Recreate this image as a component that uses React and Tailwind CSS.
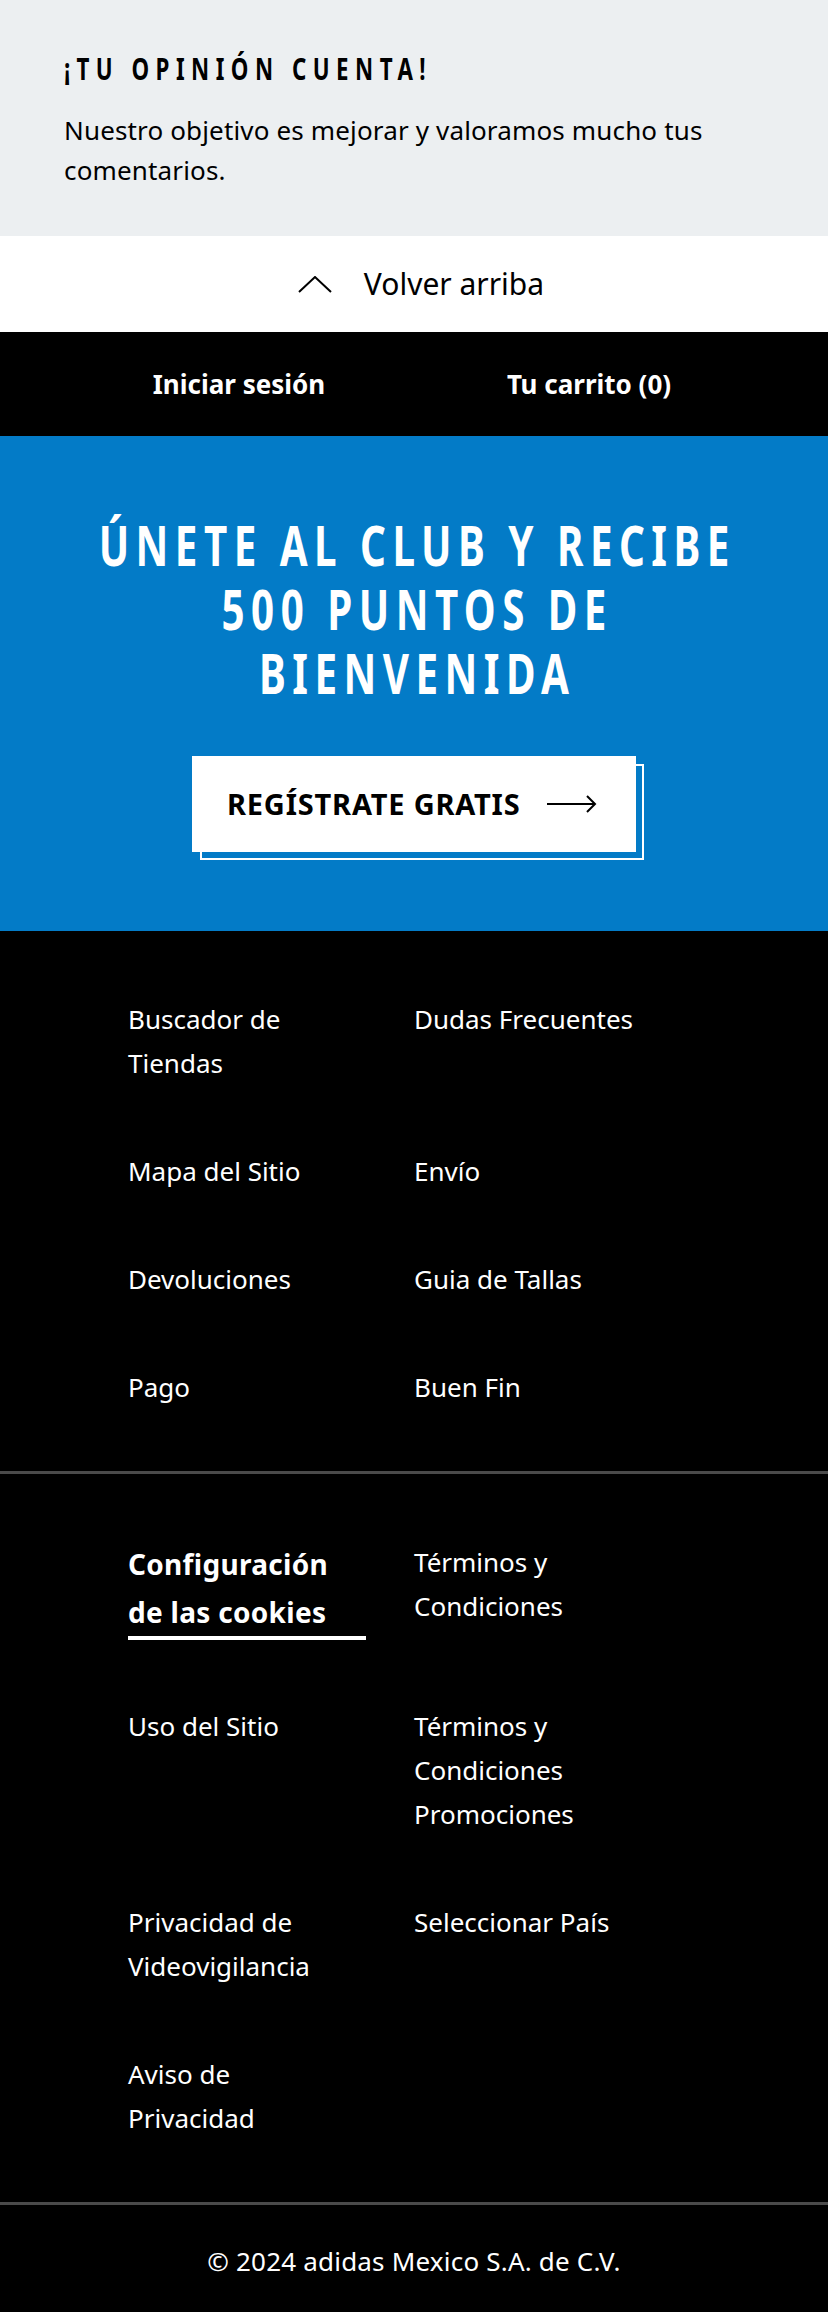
import React from "react";

function ChevronUp() {
  return (
    <svg width="34" height="17" viewBox="0 0 34 17" fill="none" aria-hidden="true">
      <polyline points="1,16 17,1 33,16" stroke="#000" strokeWidth="2" fill="none" />
    </svg>
  );
}

function ArrowRight() {
  return (
    <svg width="50" height="20" viewBox="0 0 50 20" fill="none" aria-hidden="true">
      <line x1="0" y1="10" x2="48" y2="10" stroke="#000" strokeWidth="2" />
      <polyline points="40,2 48,10 40,18" stroke="#000" strokeWidth="2" fill="none" />
    </svg>
  );
}

function FooterLink({ lines }) {
  return (
    <a href="#" className="block whitespace-nowrap text-[26px] leading-[44px] text-white">
      {lines.map((l, i) => (
        <React.Fragment key={i}>
          {i > 0 && <br />}
          {l}
        </React.Fragment>
      ))}
    </a>
  );
}

export default function App() {
  return (
    <div className="w-[828px] overflow-hidden font-['Noto_Sans',sans-serif]">
      {/* Feedback */}
      <section className="bg-[#eceff1] px-[64px] pt-[50px] pb-[46px] text-black">
        <h4 className="origin-left scale-x-[0.72] whitespace-nowrap text-[31px] leading-[36px] font-bold tracking-[9px] uppercase">
          ¡Tu opinión cuenta!
        </h4>
        <p className="mt-[24px] text-[26px] leading-[40px] tracking-[0.15px]">
          Nuestro objetivo es mejorar y valoramos mucho tus comentarios.
        </p>
      </section>

      {/* Back to top */}
      <div className="flex h-[96px] items-center justify-center gap-[32px] bg-white pl-[14px]">
        <ChevronUp />
        <span className="text-[30px] leading-[40px] text-black">Volver arriba</span>
      </div>

      {/* Account nav */}
      <nav className="grid h-[104px] grid-cols-2 items-center bg-black px-[64px]">
        <a href="#" className="text-center text-[26px] font-bold leading-[36px] text-white">
          Iniciar sesión
        </a>
        <a href="#" className="text-center text-[26px] font-bold leading-[36px] text-white">
          Tu carrito (0)
        </a>
      </nav>

      {/* Club */}
      <section className="flex h-[495px] flex-col items-center bg-[#037bc7] pt-[76px]">
        <h2 className="w-[1000px] shrink-0 origin-center scale-x-[0.72] whitespace-nowrap pl-[9px] text-center text-[56px] font-bold leading-[64px] tracking-[9px] text-white uppercase">
          Únete al club y recibe
          <br />
          500 puntos de
          <br />
          bienvenida
        </h2>
        <div className="relative mt-[52px] h-[96px] w-[444px]">
          <div className="absolute left-[8px] top-[8px] h-[96px] w-[444px] border-2 border-white" />
          <a
            href="#"
            className="relative flex h-[96px] w-[444px] items-center justify-between bg-white pl-[35px] pr-[39px]"
          >
            <span className="text-[29px] font-bold leading-[36px] tracking-[0.8px] text-black uppercase">
              Regístrate gratis
            </span>
            <ArrowRight />
          </a>
        </div>
      </section>

      {/* Footer links */}
      <footer className="bg-black">
        <div className="grid grid-cols-2 gap-y-[64px] px-[128px] pt-[66px] pb-[62px]">
          <FooterLink lines={["Buscador de", "Tiendas"]} />
          <FooterLink lines={["Dudas Frecuentes"]} />
          <FooterLink lines={["Mapa del Sitio"]} />
          <FooterLink lines={["Envío"]} />
          <FooterLink lines={["Devoluciones"]} />
          <FooterLink lines={["Guia de Tallas"]} />
          <FooterLink lines={["Pago"]} />
          <FooterLink lines={["Buen Fin"]} />
        </div>
        <div className="h-[3px] bg-[#4a4a4a]" />
        <div className="grid grid-cols-2 items-start gap-y-[64px] px-[128px] pt-[66px] pb-[62px]">
          <a
            href="#"
            className="block w-[238px] border-b-4 border-white text-[28px] font-bold leading-[48px] tracking-[0.3px] text-white"
          >
            Configuración
            <br />
            de las cookies
          </a>
          <FooterLink lines={["Términos y", "Condiciones"]} />
          <FooterLink lines={["Uso del Sitio"]} />
          <FooterLink lines={["Términos y", "Condiciones", "Promociones"]} />
          <FooterLink lines={["Privacidad de", "Videovigilancia"]} />
          <FooterLink lines={["Seleccionar País"]} />
          <FooterLink lines={["Aviso de", "Privacidad"]} />
          <div />
        </div>
        <div className="h-[3px] bg-[#4a4a4a]" />
        <div className="pt-[34px] pb-[29px] text-center text-[26px] leading-[44px] tracking-[0.2px] text-white">
          © 2024 adidas Mexico S.A. de C.V.
        </div>
      </footer>
    </div>
  );
}
